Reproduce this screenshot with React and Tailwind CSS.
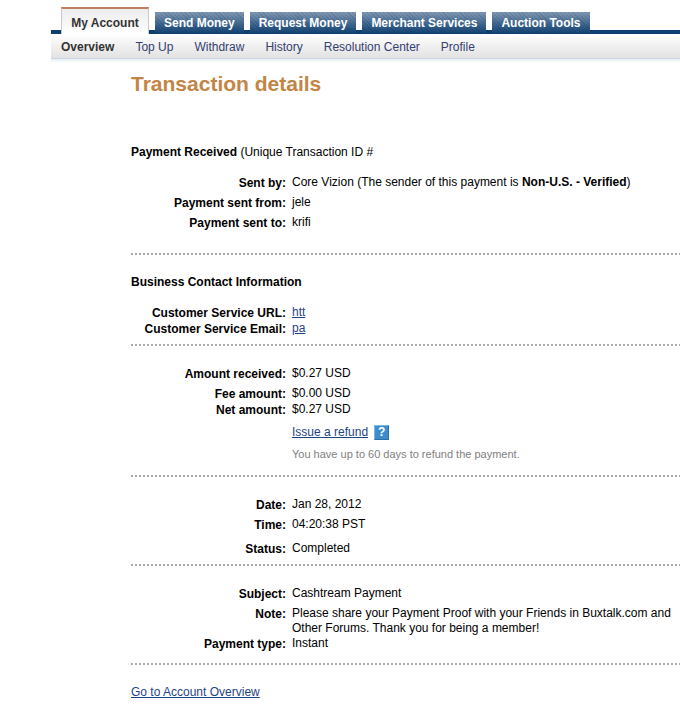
import React from 'react';

const tabs = ['Send Money', 'Request Money', 'Merchant Services', 'Auction Tools'];

const subnav = ['Overview', 'Top Up', 'Withdraw', 'History', 'Resolution Center', 'Profile'];

const Divider = () => (
  <hr className="h-[2px] border-0 bg-[repeating-linear-gradient(90deg,#a9a9a9_0px_2px,transparent_2px_4px)]" />
);

const Row = ({ label, className = '', children }) => (
  <div className={`flex min-h-4 gap-1.5 leading-[15px] ${className}`}>
    <dt className="w-[155px] shrink-0 pt-px text-right font-bold whitespace-nowrap">{label}</dt>
    <dd className="min-w-0 flex-1">{children}</dd>
  </div>
);

const TopNav = () => (
  <header className="ml-[51px]">
    <nav className="flex items-end gap-1.5 pt-[7px] pl-[10px] text-xs font-bold bg-[linear-gradient(#0f3f70,#0f3f70)] bg-[length:100%_4px] bg-bottom bg-no-repeat">
      <a
        href="#"
        className="flex h-[27px] w-[88px] items-center justify-center border-x border-t-2 border-x-[#c9c9c9] border-t-[#bd7f60] bg-gradient-to-b from-[#ececec] to-white pt-0.5 text-[#333] whitespace-nowrap"
      >
        My Account
      </a>
      {tabs.map((tab) => (
        <a
          key={tab}
          href="#"
          className="flex h-[22px] items-center bg-[repeating-linear-gradient(45deg,rgba(0,20,60,0.12)_0px_1px,transparent_1px_3px),linear-gradient(#8299b3,#3f678f_55%,#0f3f70)] px-[9px] text-white whitespace-nowrap"
        >
          {tab}
        </a>
      ))}
    </nav>
    <nav className="flex h-[25px] items-center gap-[21px] border-b border-[#c8d5e2] bg-gradient-to-b from-white to-[#e2e2e2] pt-px pl-[10px] text-xs text-[#34406f]">
      {subnav.map((item, i) => (
        <a key={item} href="#" className={`whitespace-nowrap ${i === 0 ? 'font-bold text-[#333]' : ''}`}>
          {item}
        </a>
      ))}
    </nav>
    <div className="h-1 bg-gradient-to-b from-[#e6eef6] to-white" />
  </header>
);

const App = () => {
  return (
    <div className="bg-white font-['Liberation_Sans',Arial,sans-serif] text-xs text-black">
      <TopNav />

      <main className="ml-[131px] pb-3">
        <h1 className="pt-[9px] text-[21px] font-bold leading-6 text-[#c38545]">Transaction details</h1>

        <p className="mt-12 leading-4">
          <b>Payment Received</b> (Unique Transaction ID #
        </p>

        <dl className="mt-[15px] mb-[22px] space-y-1">
          <Row label="Sent by:">
            Core Vizion (The sender of this payment is <b>Non-U.S. - Verified</b>)
          </Row>
          <Row label="Payment sent from:">jele</Row>
          <Row label="Payment sent to:">krifi</Row>
        </dl>
        <Divider />

        <h2 className="mt-[19px] font-bold leading-4">Business Contact Information</h2>
        <dl className="mt-[15px] mb-[7px]">
          <Row label="Customer Service URL:">
            <a href="#" className="text-[#1f4484] underline">htt</a>
          </Row>
          <Row label="Customer Service Email:">
            <a href="#" className="text-[#1f4484] underline">pa</a>
          </Row>
        </dl>
        <Divider />

        <dl className="mt-5">
          <Row label="Amount received:">$0.27 USD</Row>
          <Row label="Fee amount:" className="mt-1">$0.00 USD</Row>
          <Row label="Net amount:">$0.27 USD</Row>
        </dl>
        <div className="mb-[13px] ml-[161px]">
          <div className="mt-1.5 flex items-center gap-1.5 leading-4">
            <a href="#" className="text-[#1f4484] underline">Issue a refund</a>
            <button
              type="button"
              aria-label="Refund help"
              className="flex size-[15px] items-center justify-center border border-[#7db8e4] border-r-[#2f6fa8] border-b-[#2f6fa8] bg-[#3f8ccb] text-xs font-bold text-white"
            >
              ?
            </button>
          </div>
          <p className="mt-1.5 text-[11px] leading-4 text-[#808080]">You have up to 60 days to refund the payment.</p>
        </div>
        <Divider />

        <dl className="mt-5 mb-[7px]">
          <Row label="Date:">Jan 28, 2012</Row>
          <Row label="Time:" className="mt-1">04:20:38 PST</Row>
          <Row label="Status:" className="mt-2">Completed</Row>
        </dl>
        <Divider />

        <dl className="mt-5 mb-[11px]">
          <Row label="Subject:">Cashtream Payment</Row>
          <Row label="Note:" className="mt-1">
            Please share your Payment Proof with your Friends in Buxtalk.com and Other Forums. Thank you for being a
            member!
          </Row>
          <Row label="Payment type:">Instant</Row>
        </dl>
        <Divider />

        <a href="#" className="mt-[19px] inline-block leading-4 text-[#1f4484] underline">
          Go to Account Overview
        </a>
      </main>
    </div>
  );
};

export default App;
